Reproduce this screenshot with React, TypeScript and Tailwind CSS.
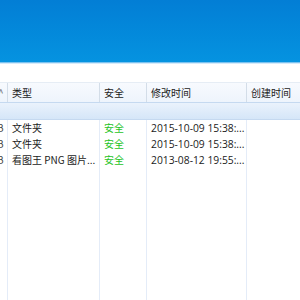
import React from 'react'

const font = { fontFamily: '"Noto Sans CJK SC", "Liberation Sans", sans-serif' }

const cols = ['w-[8px]', 'w-[92px]', 'w-[47px]', 'w-[100px]', 'flex-1']

const rows = [
  { type: '文件夹', date: '2015-10-09 15:38:...' },
  { type: '文件夹', date: '2015-10-09 15:38:...' },
  { type: '看图王 PNG 图片...', date: '2013-08-12 19:55:...' },
]

export default function App() {
  return (
    <div className="w-[300px] h-[300px] overflow-hidden bg-white text-[10px] text-[#1b1b1b]" style={font}>
      {/* title bar */}
      <div className="h-[62px] bg-gradient-to-b from-[#037ed5] to-[#0593e0]" />
      <div className="h-[1px] bg-[#7cc2ef]" />
      <div className="h-[1px] bg-[#d6ebfa]" />
      <div className="h-[18px]" />

      <div className="relative h-[218px]">
        {/* column lines in body */}
        <div className="absolute inset-0 flex pointer-events-none">
          {cols.map((c, i) => (
            <div key={i} className={`${c} h-full ${i < 4 ? 'border-r border-[#e4ecf8]' : ''}`} />
          ))}
        </div>

        <div className="relative">
          {/* column header */}
          <div className="flex h-[20px] bg-gradient-to-b from-[#f7fafe] to-[#eef4fc] border-t border-[#e6edf5]">
            <div className="w-[8px] border-r border-[#d3dde8] flex items-center overflow-hidden">
              <span className="text-[#666] text-[10px] leading-none -ml-[2px]">^</span>
            </div>
            <div className="w-[92px] border-r border-[#d3dde8] pl-[4px] flex items-center">类型</div>
            <div className="w-[47px] border-r border-[#d3dde8] pl-[4px] flex items-center">安全</div>
            <div className="w-[100px] border-r border-[#d3dde8] pl-[4px] flex items-center">修改时间</div>
            <div className="flex-1 pl-[4px] flex items-center">创建时间</div>
          </div>

          {/* group row */}
          <div className="h-[18px] bg-gradient-to-b from-[#eaf2fc] to-[#d5e6f8] border-t border-[#c5d9f0] border-b border-[#a9c6ea]" />

          {rows.map((r, i) => (
            <div key={i} className="flex h-[16px] items-center">
              <div className="w-[8px] overflow-hidden flex">
                <span className="text-[10px] leading-none -ml-[3px] text-[#444]">B</span>
              </div>
              <div className="w-[92px] pl-[4px] whitespace-nowrap overflow-hidden leading-[16px]">{r.type}</div>
              <div className="w-[47px] pl-[4px] text-[#1ec31e] leading-[16px]">安全</div>
              <div className="w-[100px] pl-[4px] leading-[16px] whitespace-nowrap" style={{ fontFamily: '"Open Sans", "Liberation Sans", sans-serif', fontSize: 10.3 }}>{r.date}</div>
              <div className="flex-1" />
            </div>
          ))}
        </div>
      </div>
    </div>
  )
}
